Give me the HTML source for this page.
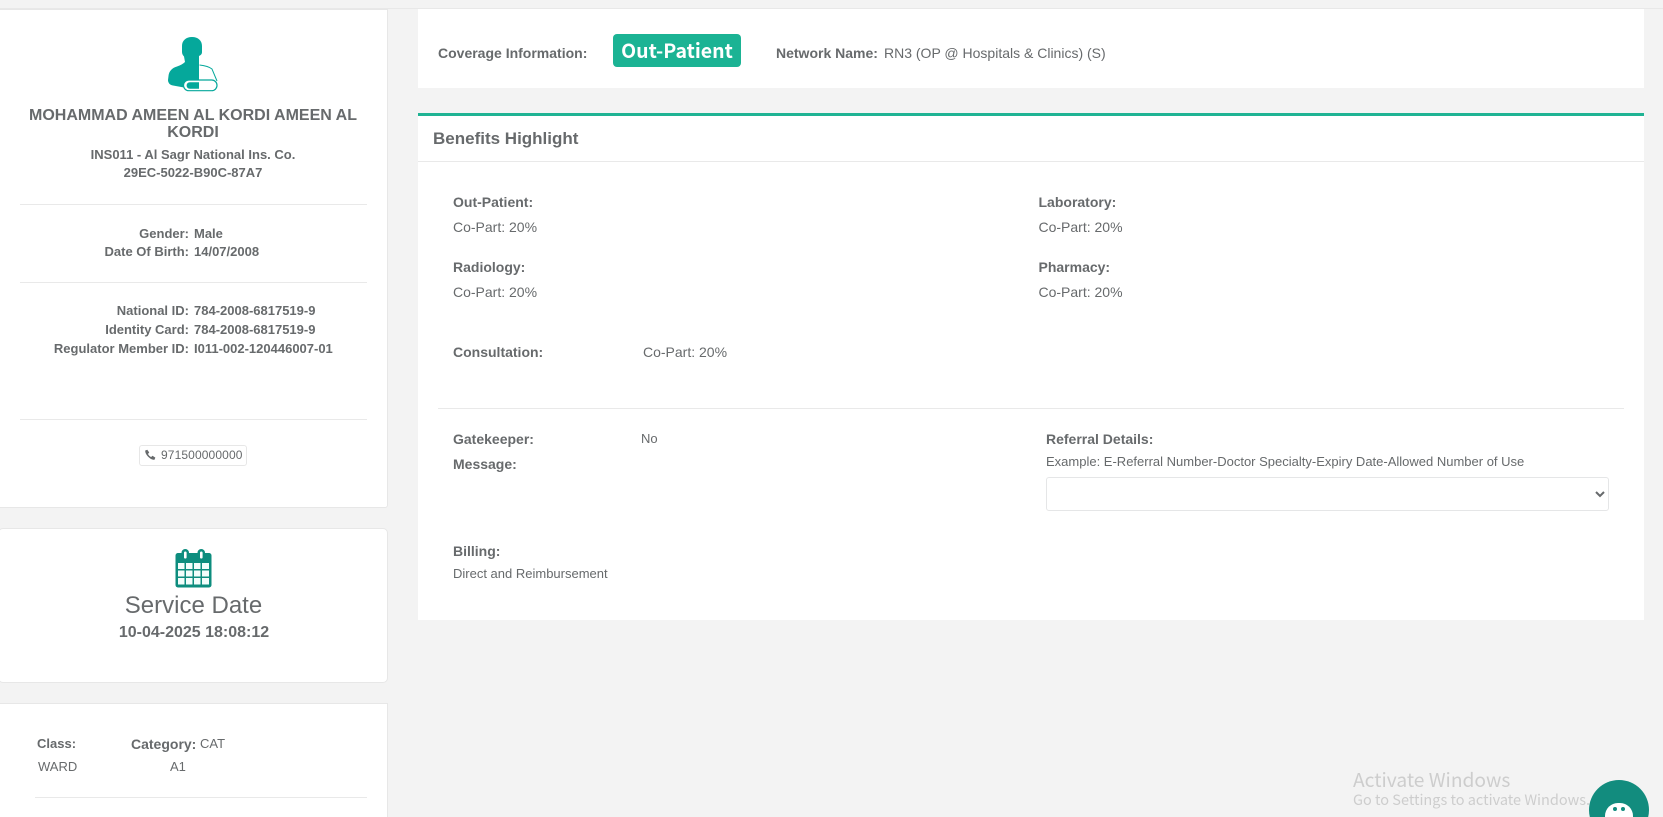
<!DOCTYPE html>
<html>
<head>
<meta charset="utf-8">
<title>Benefits</title>
<style>
html,body{margin:0;padding:0;width:1663px;height:817px;overflow:hidden}
#wrap{width:1663px;height:817px;overflow:hidden;position:relative;background:#f3f3f3;font-family:"Liberation Sans",Arial,sans-serif;color:#676a6c;font-size:14px}
.card{position:absolute;background:#fff;border:1px solid #e7e7e7;box-sizing:border-box}
.hr{position:absolute;height:1px;background:#e9e9e9}
.t{position:absolute;white-space:nowrap;line-height:18px;height:18px}
.b{font-weight:bold}
.s{font-size:13px}
.c{text-align:center}
.r{text-align:right}
</style>
</head>
<body>
<div id="wrap">
<div style="position:absolute;left:0;top:8px;width:1663px;height:1px;background:#e8e8e8"></div>

<!-- left cards -->
<div class="card" style="left:-2px;top:9px;width:390px;height:499px;border-radius:0 0 3px 0"></div>
<div class="card" style="left:-2px;top:528px;width:390px;height:155px;border-radius:5px"></div>
<div class="card" style="left:-2px;top:703px;width:390px;height:130px"></div>

<!-- person icon -->
<svg style="position:absolute;left:160px;top:30px" width="70" height="66" viewBox="160 30 70 66">
<path fill="#05a89b" d="M192 37C186 37 182 40.5 182 46L182 52C182 54 183 55.5 184 56.5L185 62C183 64 180 65.5 177 66.5C172 68 169 71 168.5 76L168 80C168 83 170 85 173 85.5L184 87.5L199 91L199 56C201 55 202 54 202 52L202 46C202 40.5 198 37 192 37Z"/>
<path fill="none" stroke="#05a89b" stroke-width="1" d="M199.5 65C204 65.5 209 66.5 212 69L217 81"/>
<rect x="183.5" y="80" width="33.5" height="10.7" rx="5.3" fill="#fff" stroke="#05a89b" stroke-width="1.2"/>
<path fill="#05a89b" d="M190 82.3L199 82.3L199 88.8L190 88.8C185.5 88.8 185.5 82.3 190 82.3Z"/>
</svg>

<div class="t b c" style="left:18px;width:350px;top:107px;font-size:16px">MOHAMMAD AMEEN AL KORDI AMEEN AL</div>
<div class="t b c" style="left:18px;width:350px;top:124px;font-size:16px">KORDI</div>
<div class="t b c s" style="left:18px;width:350px;top:146px">INS011 - Al Sagr National Ins. Co.</div>
<div class="t b c s" style="left:18px;width:350px;top:164px">29EC-5022-B90C-87A7</div>
<div class="hr" style="left:20px;width:347px;top:204px"></div>

<div class="t b r s" style="left:0;width:189px;top:225px">Gender:</div>
<div class="t b s" style="left:194px;top:225px">Male</div>
<div class="t b r s" style="left:0;width:189px;top:243px">Date Of Birth:</div>
<div class="t b s" style="left:194px;top:243px">14/07/2008</div>
<div class="hr" style="left:20px;width:347px;top:282px"></div>

<div class="t b r s" style="left:0;width:189px;top:302px">National ID:</div>
<div class="t b s" style="left:194px;top:302px">784-2008-6817519-9</div>
<div class="t b r s" style="left:0;width:189px;top:321px">Identity Card:</div>
<div class="t b s" style="left:194px;top:321px">784-2008-6817519-9</div>
<div class="t b r s" style="left:0;width:189px;top:340px">Regulator Member ID:</div>
<div class="t b s" style="left:194px;top:340px">I011-002-120446007-01</div>
<div class="hr" style="left:20px;width:347px;top:419px"></div>

<div style="position:absolute;left:139px;top:445px;width:108px;height:21px;box-sizing:border-box;border:1px solid #e7e7e7;border-radius:3px;background:#fff"></div>
<svg style="position:absolute;left:144px;top:449px" width="12" height="12" viewBox="0 0 24 24"><path fill="#676a6c" d="M6.6 1.5L2.5 3C1.5 10.5 13 22.5 21 21.5L22.7 17.3L17 13.5L14.3 16C11.5 15 9 12.5 8 9.7L10.5 7Z"/></svg>
<div class="t" style="left:161px;top:446px;font-size:12px;letter-spacing:.12px">971500000000</div>

<!-- calendar -->
<svg style="position:absolute;left:170px;top:545px" width="48" height="46" viewBox="170 545 48 46">
<rect x="175.5" y="553" width="36" height="34.5" rx="2.5" fill="#0d8d7e"/>
<rect x="181.5" y="549" width="7.5" height="11" rx="3.7" fill="#0d8d7e"/>
<rect x="197.5" y="549" width="7.5" height="11" rx="3.7" fill="#0d8d7e"/>
<rect x="184" y="551.5" width="2.6" height="7" rx="1.3" fill="#fff"/>
<rect x="200" y="551.5" width="2.6" height="7" rx="1.3" fill="#fff"/>
<g fill="#f2fdfb">
<rect x="178" y="563" width="6.5" height="6"/><rect x="186" y="563" width="6.5" height="6"/><rect x="194" y="563" width="6.5" height="6"/><rect x="202" y="563" width="7" height="6"/>
<rect x="178" y="570.5" width="6.5" height="6"/><rect x="186" y="570.5" width="6.5" height="6"/><rect x="194" y="570.5" width="6.5" height="6"/><rect x="202" y="570.5" width="7" height="6"/>
<rect x="178" y="578" width="6.5" height="6.5"/><rect x="186" y="578" width="6.5" height="6.5"/><rect x="194" y="578" width="6.5" height="6.5"/><rect x="202" y="578" width="7" height="6.5"/>
</g>
</svg>

<div class="t c" style="left:18.5px;width:350px;top:592px;font-size:24px;line-height:28px;height:28px">Service Date</div>
<div class="t b c" style="left:19px;width:350px;top:624px;font-size:16px">10-04-2025 18:08:12</div>

<div class="t b s" style="left:37px;top:735px">Class:</div>
<div class="t b" style="left:131px;top:735px;font-size:14px">Category:</div>
<div class="t s" style="left:200px;top:735px">CAT</div>
<div class="t s" style="left:38px;top:758px">WARD</div>
<div class="t s" style="left:170px;top:758px">A1</div>
<div class="hr" style="left:35px;width:332px;top:797px"></div>

<!-- right: coverage panel -->
<div style="position:absolute;left:418px;top:9px;width:1226px;height:79px;background:#fff"></div>
<div class="t b" style="left:438px;top:44px">Coverage Information:</div>
<div style="position:absolute;left:613px;top:34px;width:128px;height:33px;border-radius:4px;background:#1bb394"></div>
<div class="t c b" style="left:613px;width:128px;top:38px;height:24px;line-height:24px;color:#fff;font-family:'Noto Sans CJK SC','Liberation Sans',sans-serif;font-size:19.5px">Out-Patient</div>
<div class="t b" style="left:776px;top:44px">Network Name:</div>
<div class="t" style="left:884px;top:44px">RN3 (OP @ Hospitals &amp; Clinics) (S)</div>

<!-- benefits panel -->
<div style="position:absolute;left:418px;top:113px;width:1226px;height:507px;background:#fff;border-top:3px solid #1fb393;box-sizing:border-box"></div>
<div class="hr" style="left:418px;width:1226px;top:161px"></div>
<div class="t b" style="left:433px;top:130px;font-size:17px">Benefits Highlight</div>

<div class="t b" style="left:453px;top:193px">Out-Patient:</div>
<div class="t" style="left:453px;top:218px">Co-Part: 20%</div>
<div class="t b" style="left:453px;top:258px">Radiology:</div>
<div class="t" style="left:453px;top:283px">Co-Part: 20%</div>
<div class="t b" style="left:1038.5px;top:193px">Laboratory:</div>
<div class="t" style="left:1038.5px;top:218px">Co-Part: 20%</div>
<div class="t b" style="left:1038.5px;top:258px">Pharmacy:</div>
<div class="t" style="left:1038.5px;top:283px">Co-Part: 20%</div>
<div class="t b" style="left:453px;top:343px">Consultation:</div>
<div class="t" style="left:643px;top:343px">Co-Part: 20%</div>
<div class="hr" style="left:438px;width:1186px;top:408px"></div>

<div class="t b" style="left:453px;top:430px">Gatekeeper:</div>
<div class="t s" style="left:641px;top:430px">No</div>
<div class="t b" style="left:453px;top:455px">Message:</div>
<div class="t b" style="left:1046px;top:430px">Referral Details:</div>
<div class="t s" style="left:1046px;top:453px">Example: E-Referral Number-Doctor Specialty-Expiry Date-Allowed Number of Use</div>
<select style="position:absolute;left:1046px;top:477px;width:563px;height:34px;box-sizing:border-box;border:1px solid #e5e6e7;border-radius:3px;background:#fff;color:#676a6c;font-family:inherit;font-size:13px;outline:none"><option></option></select>
<div class="t b" style="left:453px;top:542px">Billing:</div>
<div class="t s" style="left:453px;top:565px">Direct and Reimbursement</div>

<!-- activate windows -->
<div class="t" style="left:1353px;top:767px;height:24px;line-height:24px;font-size:19.2px;color:#cdcdcd;font-family:'Noto Sans CJK SC','Liberation Sans',sans-serif">Activate Windows</div>
<div class="t" style="left:1353px;top:791px;font-size:14.5px;color:#cdcdcd;font-family:'Noto Sans CJK SC','Liberation Sans',sans-serif">Go to Settings to activate Windows.</div>

<!-- chat -->
<div style="position:absolute;left:1589px;top:780px;width:60px;height:60px;border-radius:50%;background:#128c7e"></div>
<div style="position:absolute;left:1605px;top:803px;width:28px;height:26px;border-radius:13px;background:#fff"></div>
<div style="position:absolute;left:1613px;top:807px;width:4px;height:4px;border-radius:50%;background:#128c7e"></div>
<div style="position:absolute;left:1621px;top:807px;width:4px;height:4px;border-radius:50%;background:#128c7e"></div>
</div>
</body>
</html>
